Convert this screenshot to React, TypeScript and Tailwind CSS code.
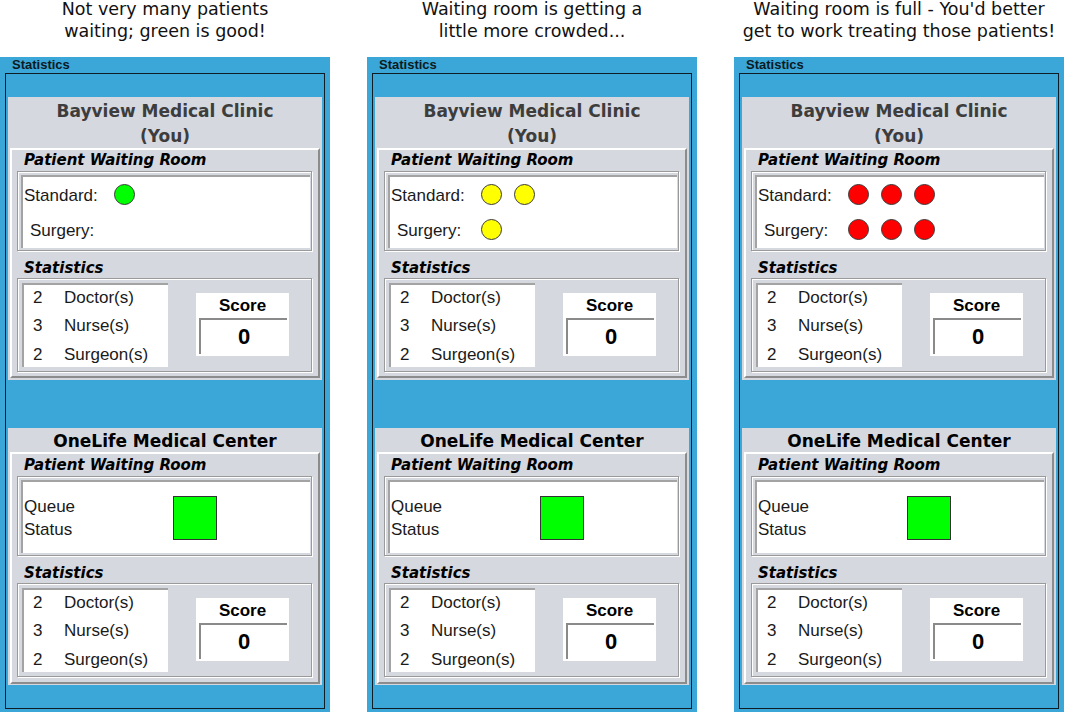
type DotColor = "green" | "yellow" | "red";

const dotClass: Record<DotColor, string> = {
  green: "bg-[#00ff00]",
  yellow: "bg-[#ffff00]",
  red: "bg-[#ff0000]",
};

type Scenario = {
  caption: [string, string];
  standard: number;
  surgery: number;
  color: DotColor;
};

const scenarios: Scenario[] = [
  { caption: ["Not very many patients", "waiting; green is good!"], standard: 1, surgery: 0, color: "green" },
  { caption: ["Waiting room is getting a", "little more crowded..."], standard: 2, surgery: 1, color: "yellow" },
  { caption: ["Waiting room is full - You'd better", "get to work treating those patients!"], standard: 3, surgery: 3, color: "red" },
];

const staff = [
  { n: 2, label: "Doctor(s)" },
  { n: 3, label: "Nurse(s)" },
  { n: 2, label: "Surgeon(s)" },
];

function Dots({ count, color }: { count: number; color: DotColor }) {
  return (
    <div className="flex gap-[12px]">
      {Array.from({ length: count }).map((_, i) => (
        <span key={i} className={`w-[21px] h-[21px] rounded-full border border-[#3a3a3a] ${dotClass[color]}`} />
      ))}
    </div>
  );
}

function SectionLabel({ children, className }: { children: string; className: string }) {
  return (
    <div
      className={`pl-[12px] text-[15px] font-bold italic text-black font-['DejaVu_Sans',Verdana,sans-serif] ${className}`}
    >
      {children}
    </div>
  );
}

function Etched({ children, className }: { children: React.ReactNode; className: string }) {
  return (
    <div
      className={`ml-[5px] mr-[6px] border border-[#9a9a9a] shadow-[inset_1px_1px_0_#ffffff,1px_1px_0_#ffffff] ${className}`}
    >
      {children}
    </div>
  );
}

function StatsBox() {
  return (
    <Etched className="h-[94px] pt-[4px] pl-[4px] flex items-start">
      <div className="w-[146px] h-[84px] bg-white border-t-2 border-l-2 border-[#a3a3a3]">
        <div className="-mt-[2px]">
          {staff.map((s) => (
            <div key={s.label} className="h-[28.5px] flex items-center text-[17px] text-[#1a1a1a]">
              <span className="w-[40px] pl-[9px]">{s.n}</span>
              <span>{s.label}</span>
            </div>
          ))}
        </div>
      </div>
      <div className="ml-[28px] mt-[10px] w-[93px] h-[63px] bg-white flex flex-col">
        <div className="h-[25px] flex items-center justify-center text-[17px] font-bold text-black">Score</div>
        <div className="ml-[3px] mr-[2px] h-[36px] border-t-2 border-l-2 border-[#8a8a8a] flex items-center justify-center text-[22px] font-bold text-black">
          <span className="-mt-[2px]">0</span>
        </div>
      </div>
    </Etched>
  );
}

function Raised({ children, className }: { children: React.ReactNode; className: string }) {
  return (
    <div
      className={`mx-[2px] flex-1 border-2 border-t-white border-l-white border-r-[#8c8c8c] border-b-[#8c8c8c] ${className}`}
    >
      {children}
    </div>
  );
}

function Panel({ s }: { s: Scenario }) {
  return (
    <div className="w-[330px] shrink-0 flex flex-col">
      <div className="h-[57px] text-center text-[17.5px] text-[#111] font-['DejaVu_Sans',Verdana,sans-serif]">
        <p className="-mt-[2px] leading-[22px] whitespace-nowrap">
          {s.caption[0]}
          <br />
          {s.caption[1]}
        </p>
      </div>
      <div className="flex-1 bg-[#3ba6d8] flex flex-col">
        <div className="h-[16px] pl-[12px] text-[13px] font-bold leading-[16px] text-[#0d1a22]">Statistics</div>
        <div className="mx-[5px] h-[636px] border border-[#0f1c24] px-[2px] pt-[23px] flex flex-col">
          {/* our clinic */}
          <div className="h-[283px] bg-[#d5d8df] flex flex-col">
            <div className="h-[51px] pt-[2px] text-center text-[17px] font-bold leading-[25px] text-[#3d3d3d] font-['DejaVu_Sans',Verdana,sans-serif]">
              Bayview Medical Clinic
              <br />
              (You)
            </div>
            <Raised className="mb-[2px]">
              <SectionLabel className="h-[21px] pt-[1px] leading-[19px]">Patient Waiting Room</SectionLabel>
              <Etched className="h-[80px] pt-[3px] pl-[3px] pr-[1px] pb-[2px]">
                <div className="h-full bg-white border-t-2 border-l-2 border-[#a3a3a3] text-[17px] text-[#1a1a1a]">
                  <div className="h-[35px] flex items-center">
                    <span className="w-[91px] pl-[1px] pt-[3px]">Standard:</span>
                    <Dots count={s.standard} color={s.color} />
                  </div>
                  <div className="h-[35px] flex items-center">
                    <span className="w-[91px] pl-[7px] pt-[3px]">Surgery:</span>
                    <Dots count={s.surgery} color={s.color} />
                  </div>
                </div>
              </Etched>
              <SectionLabel className="h-[27px] flex items-end pb-[1px] leading-[18px]">Statistics</SectionLabel>
              <StatsBox />
            </Raised>
          </div>

          <div className="h-[48px]" />

          {/* opponent */}
          <div className="h-[257px] bg-[#d5d8df] flex flex-col">
            <div className="h-[24px] pt-[1px] text-center text-[17px] font-bold leading-[24px] text-black font-['DejaVu_Sans',Verdana,sans-serif]">
              OneLife Medical Center
            </div>
            <Raised className="mb-[1px]">
              <SectionLabel className="h-[22px] pt-[2px] leading-[19px]">Patient Waiting Room</SectionLabel>
              <Etched className="h-[80px] pt-[3px] pl-[3px] pr-[1px] pb-[2px]">
                <div className="h-full bg-white border-t-2 border-l-2 border-[#a3a3a3] flex items-center text-[17px] text-[#1a1a1a]">
                  <div className="w-[150px] pl-[1px] leading-[23px]">
                    Queue
                    <br />
                    Status
                  </div>
                  <span className="w-[44px] h-[44px] bg-[#00ff00] border border-[#333]" />
                </div>
              </Etched>
              <SectionLabel className="h-[27px] flex items-end pb-[1px] leading-[18px]">Statistics</SectionLabel>
              <StatsBox />
            </Raised>
          </div>
        </div>
      </div>
    </div>
  );
}

export default function App() {
  return (
    <div className="w-[1066px] h-[712px] bg-white flex gap-[37px] overflow-hidden font-['Liberation_Sans',Arial,sans-serif]">
      {scenarios.map((s, i) => (
        <Panel key={i} s={s} />
      ))}
    </div>
  );
}
